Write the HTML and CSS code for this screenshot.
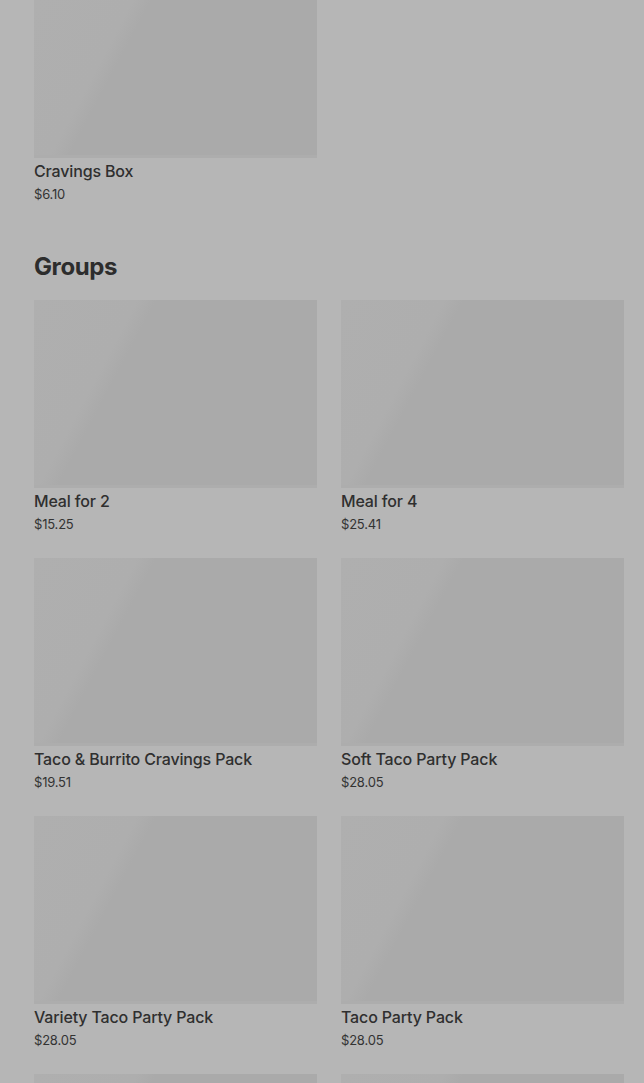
FILE: index.html
```
<!DOCTYPE html>
<html>
<head>
<meta charset="utf-8">
<link rel="stylesheet" href="styles.css">
</head>
<body>
<main class="menu">
  <section class="section section--top">
    <div class="grid">
      <div class="card">
        <div class="thumb thumb--cut"></div>
        <div class="name">Cravings Box</div>
        <div class="price">$6.10</div>
      </div>
    </div>
  </section>
  <section class="section">
    <h2 class="heading">Groups</h2>
    <div class="grid">
      <div class="card"><div class="thumb"></div><div class="name">Meal for 2</div><div class="price">$15.25</div></div>
      <div class="card"><div class="thumb"></div><div class="name">Meal for 4</div><div class="price">$25.41</div></div>
      <div class="card"><div class="thumb"></div><div class="name">Taco &amp; Burrito Cravings Pack</div><div class="price">$19.51</div></div>
      <div class="card"><div class="thumb"></div><div class="name">Soft Taco Party Pack</div><div class="price">$28.05</div></div>
      <div class="card"><div class="thumb"></div><div class="name">Variety Taco Party Pack</div><div class="price">$28.05</div></div>
      <div class="card"><div class="thumb"></div><div class="name">Taco Party Pack</div><div class="price">$28.05</div></div>
      <div class="card"><div class="thumb"></div></div>
      <div class="card"><div class="thumb"></div></div>
    </div>
  </section>
</main>
</body>
</html>
```
FILE: styles.css
```
html, body {
  margin: 0;
  padding: 0;
  background: #b6b6b6;
  overflow: hidden;
}
body {
  font-family: "Inter", "Roboto", "Liberation Sans", sans-serif;
  color: #2f2f2f;
}
.menu {
  padding: 0 20px 0 34px;
}
.section--top {
  margin-bottom: 47px;
}
.grid {
  display: grid;
  grid-template-columns: 283px 283px;
  column-gap: 24px;
  row-gap: 24px;
}
.thumb {
  height: 188px;
  background: linear-gradient(118deg, #afafaf 0%, #aeaeae 27%, #aaaaaa 32%, #aaaaaa 100%);
  box-shadow: inset 0 -3px 0 #adadad;
}
.thumb--cut {
  height: 158px;
}
.name {
  margin-top: 1px;
  font-size: 16px;
  line-height: 24px;
  font-weight: 500;
  letter-spacing: -0.15px;
}
.price {
  padding-top: 1px;
  font-size: 13px;
  line-height: 20px;
  letter-spacing: -0.2px;
  color: #333333;
}
.heading {
  margin: 0 0 17px 0;
  font-size: 24px;
  line-height: 32px;
  font-weight: 700;
  letter-spacing: -0.4px;
  color: #2d2d2d;
}
```
